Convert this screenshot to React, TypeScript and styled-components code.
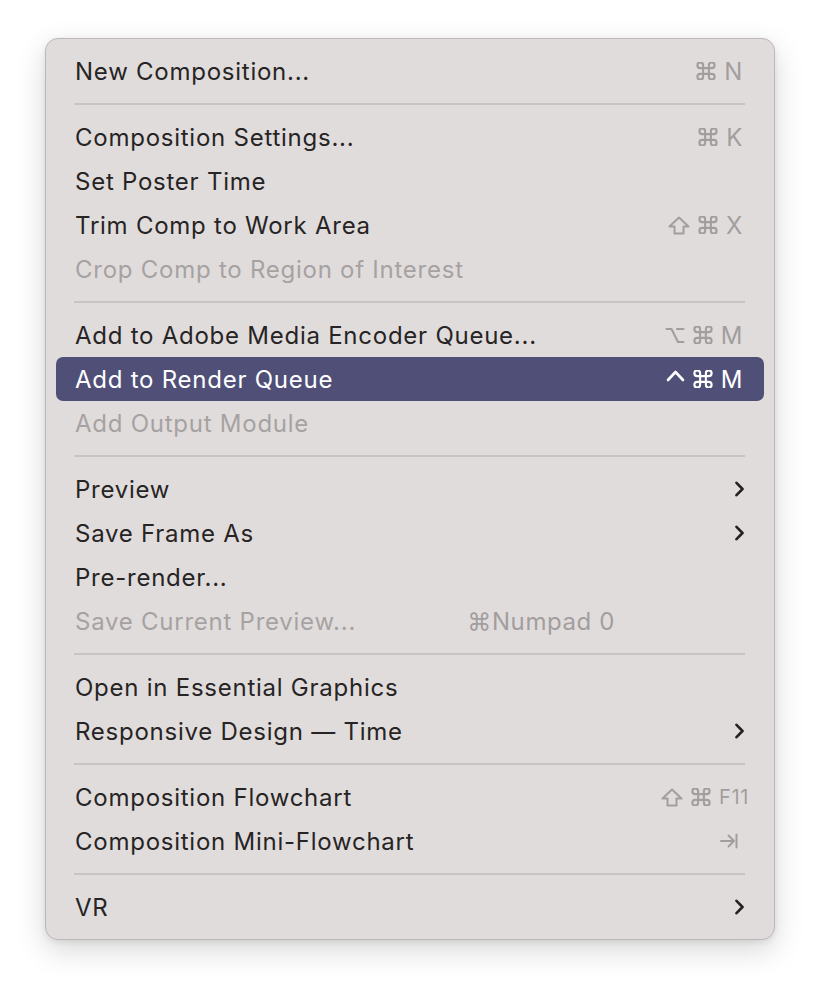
import React from "react";
import styled, { createGlobalStyle } from "styled-components";

const Global = createGlobalStyle`
  html, body { margin: 0; padding: 0; background: #ffffff; }
  body { font-family: Inter, "Noto Sans", "DejaVu Sans", sans-serif; -webkit-font-smoothing: antialiased; }
`;

const Page = styled.div`
  width: 820px;
  height: 992px;
  padding: 38px 0 0 45px;
  box-sizing: border-box;
`;

const Menu = styled.div`
  width: 730px;
  box-sizing: border-box;
  padding: 10px 10px;
  background: #e1dcdc;
  border: 1px solid #bdb8b8;
  border-radius: 13px;
  box-shadow: 0 10px 30px rgba(0, 0, 0, 0.16), 0 2px 6px rgba(0, 0, 0, 0.08);
  display: flex;
  flex-direction: column;
`;

const Row = styled.div<{ $active?: boolean; $disabled?: boolean }>`
  height: 44px;
  display: flex;
  align-items: center;
  padding: 0 21px 0 19px;
  border-radius: 7px;
  font-size: 24px;
  letter-spacing: 0.75px;
  background: ${(p) => (p.$active ? "#4f4f78" : "transparent")};
  color: ${(p) => (p.$active ? "#ffffff" : p.$disabled ? "#a6a2a2" : "#262424")};
`;

const Label = styled.span`
  flex: 1;
  white-space: nowrap;
`;

const Shortcut = styled.span<{ $active?: boolean; $inline?: boolean }>`
  display: flex;
  align-items: center;
  gap: 8px;
  color: ${(p) => (p.$active ? "#ffffff" : "#a29e9e")};
  font-size: 24px;
  letter-spacing: 0.6px;
  ${(p) => (p.$inline ? "margin-right: 128px;" : "")}
`;

const SmallKey = styled.span`
  font-size: 20px;
  letter-spacing: 0.6px;
  margin-right: -6px;
`;

const Separator = styled.div`
  height: 2px;
  margin: 10px 19px 10px 18px;
  background: #c9c4c4;
`;

const Icon = styled.svg`
  display: block;
  flex: none;
  fill: none;
  stroke: currentColor;
  stroke-linecap: round;
  stroke-linejoin: round;
`;

const TabIcon = styled(Icon)`
  margin-right: 5px;
`;

const ChevronIcon = styled(Icon)`
  color: #222222;
  margin-right: -1px;
`;

const Cmd = () => (
  <Icon width="20" height="18" viewBox="2.6 2.6 18.8 18.8" strokeWidth={2.2}>
    <path d="M15 6v12a3 3 0 1 0 3-3H6a3 3 0 1 0 3 3V6a3 3 0 1 0-3 3h12a3 3 0 1 0-3-3" />
  </Icon>
);

const Shift = () => (
  <Icon width="22" height="19" viewBox="0 0 22 19" strokeWidth={2}>
    <path d="M11 1.5 L20.5 10.5 H15.5 V17.5 H6.5 V10.5 H1.5 Z" />
  </Icon>
);

const Option = () => (
  <Icon width="20" height="17" viewBox="0 0 20 17" strokeWidth={2.1}>
    <path d="M1.5 2 H6.5 L13 15 H18.5 M12 2 H18.5" />
  </Icon>
);

const Ctrl = () => (
  <Icon width="19" height="20" viewBox="0 0 19 20" strokeWidth={2.6}>
    <path d="M2 11 L9.5 3 L17 11" />
  </Icon>
);

const Tab = () => (
  <TabIcon width="18" height="16" viewBox="0 0 18 16" strokeWidth={2}>
    <path d="M1 8 H14 M8.5 2.5 L14 8 L8.5 13.5 M16.5 1.5 V14.5" />
  </TabIcon>
);

const Chevron = () => (
  <ChevronIcon width="9" height="16" viewBox="0 0 9 16" strokeWidth={2.6}>
    <path d="M1.5 1.8 L7.5 8 L1.5 14.2" />
  </ChevronIcon>
);

type Item =
  | { sep: true }
  | {
      sep?: false;
      label: string;
      keys?: React.ReactNode;
      disabled?: boolean;
      active?: boolean;
      sub?: boolean;
      inline?: boolean;
    };

const items: Item[] = [
  { label: "New Composition...", keys: <><Cmd /><span>N</span></> },
  { sep: true },
  { label: "Composition Settings...", keys: <><Cmd /><span>K</span></> },
  { label: "Set Poster Time" },
  { label: "Trim Comp to Work Area", keys: <><Shift /><Cmd /><span>X</span></> },
  { label: "Crop Comp to Region of Interest", disabled: true },
  { sep: true },
  { label: "Add to Adobe Media Encoder Queue...", keys: <><Option /><Cmd /><span>M</span></> },
  { label: "Add to Render Queue", active: true, keys: <><Ctrl /><Cmd /><span>M</span></> },
  { label: "Add Output Module", disabled: true },
  { sep: true },
  { label: "Preview", sub: true },
  { label: "Save Frame As", sub: true },
  { label: "Pre-render..." },
  { label: "Save Current Preview...", disabled: true, inline: true, keys: <span>⌘Numpad 0</span> },
  { sep: true },
  { label: "Open in Essential Graphics" },
  { label: "Responsive Design — Time", sub: true },
  { sep: true },
  { label: "Composition Flowchart", keys: <><Shift /><Cmd /><SmallKey>F11</SmallKey></> },
  { label: "Composition Mini-Flowchart", keys: <Tab /> },
  { sep: true },
  { label: "VR", sub: true },
];

export default function App() {
  return (
    <Page>
      <Global />
      <Menu>
        {items.map((it, i) =>
          it.sep ? (
            <Separator key={i} />
          ) : (
            <Row key={i} $active={it.active} $disabled={it.disabled}>
              <Label>{it.label}</Label>
              {it.keys && (
                <Shortcut $active={it.active} $inline={it.inline}>
                  {it.keys}
                </Shortcut>
              )}
              {it.sub && <Chevron />}
            </Row>
          )
        )}
      </Menu>
    </Page>
  );
}
